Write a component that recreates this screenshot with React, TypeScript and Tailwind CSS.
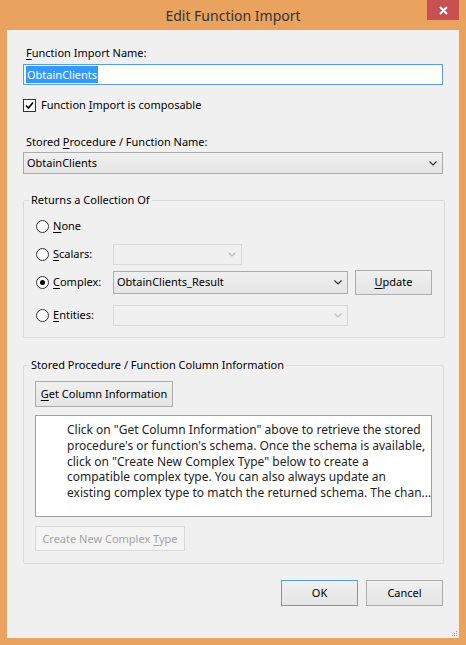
import type { ReactNode } from 'react'

const font = "font-['Noto_Sans',sans-serif]"

function U({ children }: { children: ReactNode }) {
  return <span className="underline underline-offset-2 decoration-1">{children}</span>
}

function Chevron({ disabled }: { disabled?: boolean }) {
  return (
    <svg width="8" height="5" viewBox="0 0 8 5" fill="none" aria-hidden="true">
      <path
        d="M0.5 0.5L4 4L7.5 0.5"
        stroke={disabled ? '#BFBFBF' : '#333333'}
        strokeWidth="1.2"
      />
    </svg>
  )
}

function Combo({
  value,
  disabled,
  className,
}: {
  value?: string
  disabled?: boolean
  className: string
}) {
  return (
    <div
      className={
        disabled
          ? `flex items-center justify-between border border-[#D9D9D9] bg-[#F0F0F0] pl-[3px] pr-[5px] ${className}`
          : `flex items-center justify-between border border-[#ACACAC] bg-gradient-to-b from-[#F0F0F0] to-[#E5E5E5] pl-[3px] pr-[5px] ${className}`
      }
    >
      <span className="text-[#000]">{value}</span>
      <Chevron disabled={disabled} />
    </div>
  )
}

function Button({
  children,
  className,
  disabled,
  isDefault,
}: {
  children: ReactNode
  className: string
  disabled?: boolean
  isDefault?: boolean
}) {
  let tone = 'border-[#ACACAC] bg-gradient-to-b from-[#F0F0F0] to-[#E5E5E5] text-[#000]'
  if (isDefault) tone = 'border-[#569DE5] bg-gradient-to-b from-[#F0F0F0] to-[#E5E5E5] text-[#000]'
  if (disabled) tone = 'border-[#D9D9D9] bg-[#F4F4F4] text-[#A3A3A3]'
  return (
    <div className={`flex items-center justify-center whitespace-nowrap border ${tone} ${className}`}>
      {children}
    </div>
  )
}

function Radio({ checked, children }: { checked?: boolean; children: ReactNode }) {
  return (
    <div className="flex items-center w-[77px] shrink-0">
      <span className="w-[13px] h-[13px] rounded-full border border-[#333] bg-white flex items-center justify-center">
        {checked && <span className="w-[5px] h-[5px] rounded-full bg-[#000]" />}
      </span>
      <span className="ml-[4px]">{children}</span>
    </div>
  )
}

export default function App() {
  const descLines = [
    'Click on "Get Column Information" above to retrieve the stored',
    "procedure's or function's schema. Once the schema is available,",
    'click on "Create New Complex Type" below to create a',
    'compatible complex type. You can also always update an',
    'existing complex type to match the returned schema. The chan...',
  ]

  return (
    <div className={`w-[466px] h-[645px] bg-[#E9A35F] flex flex-col ${font} text-[11px] leading-[16px] text-[#000]`}>
      {/* Title bar */}
      <div className="relative h-[30px] shrink-0 flex items-center justify-center">
        <span className="text-[14px] text-[#333] pt-[1px]">Edit Function Import</span>
        <div className="absolute right-[7px] top-0 w-[32px] h-[20px] bg-[#C75050] flex items-center justify-center">
          <svg width="9" height="9" viewBox="0 0 9 9" aria-hidden="true">
            <path d="M1 1L8 8M8 1L1 8" stroke="#fff" strokeWidth="2" />
          </svg>
        </div>
      </div>

      {/* Client area */}
      <div className="relative mx-[7px] mb-[7px] flex-1 bg-[#F0F0F0] px-[16px] pt-[15px] flex flex-col">
        <div className="pl-[3px]">
          <U>F</U>unction Import Name:
        </div>
        <div className="mt-[3px] h-[21px] border border-[#569DE5] bg-white flex items-center pl-[2px]">
          <span className="bg-[#3399FF] text-white px-[1px] leading-[17px]">ObtainClients</span>
        </div>

        <div className="mt-[12px] flex items-center h-[16px]">
          <span className="w-[13px] h-[13px] border border-[#333] bg-white flex items-center justify-center">
            <svg width="9" height="9" viewBox="0 0 9 9" fill="none" aria-hidden="true">
              <path d="M1 4.5L3.5 7L8 1.5" stroke="#000" strokeWidth="1.6" />
            </svg>
          </span>
          <span className="ml-[5px]">
            Function <U>I</U>mport is composable
          </span>
        </div>

        <div className="mt-[21px] pl-[3px]">
          Stored <U>P</U>rocedure / Function Name:
        </div>
        <Combo value="ObtainClients" className="mt-[2px] h-[22px]" />

        {/* Returns a Collection Of */}
        <fieldset className="mt-[18px] border border-[#DCDCDC] rounded-[2px] px-[12px] pb-[11px]">
          <legend className="-ml-[7px] px-[2px] leading-[16px]">Returns a Collection Of</legend>
          <div className="mt-[7px] flex items-center h-[22px]">
            <Radio>
              <U>N</U>one
            </Radio>
          </div>
          <div className="mt-[6px] flex items-center h-[22px]">
            <Radio>
              <U>S</U>calars:
            </Radio>
            <Combo disabled className="w-[129px] h-[21px]" />
          </div>
          <div className="mt-[4px] flex items-center h-[26px]">
            <Radio checked>
              <U>C</U>omplex:
            </Radio>
            <Combo value="ObtainClients_Result" className="w-[235px] h-[23px]" />
            <Button className="ml-[7px] w-[77px] h-[25px]">
              <span>
                <U>U</U>pdate
              </span>
            </Button>
          </div>
          <div className="mt-[9px] flex items-center h-[22px]">
            <Radio>
              <U>E</U>ntities:
            </Radio>
            <Combo disabled className="w-[235px] h-[21px]" />
          </div>
        </fieldset>

        {/* Column information */}
        <fieldset className="mt-[19px] border border-[#DCDCDC] rounded-[2px] px-[11px] pb-[12px]">
          <legend className="-ml-[6px] px-[2px] leading-[16px]">
            Stored Procedure / Function Column Information
          </legend>
          <Button className="mt-[8px] w-[138px] h-[26px]">
            <span>
              <U>G</U>et Column Information
            </span>
          </Button>
          <div className="mt-[8px] h-[102px] border border-[#A0A0A0] bg-white pl-[31px] pt-[6px] text-[12px] leading-[15.75px] text-[#1E1E1E]">
            {descLines.map((line) => (
              <div key={line} className="whitespace-nowrap">
                {line}
              </div>
            ))}
          </div>
          <Button disabled className="mt-[9px] w-[150px] h-[25px]">
            <span>
              Create New Complex <U>T</U>ype
            </span>
          </Button>
        </fieldset>

        {/* Dialog buttons */}
        <div className="mt-[16px] flex justify-end gap-[8px]">
          <Button isDefault className="w-[77px] h-[26px]">
            OK
          </Button>
          <Button className="w-[77px] h-[26px]">Cancel</Button>
        </div>

        {/* Resize grip */}
        <svg
          className="absolute right-[1px] bottom-[1px]"
          width="7"
          height="7"
          viewBox="0 0 7 7"
          aria-hidden="true"
        >
          <rect x="5" y="1" width="1" height="1" fill="#A0A0A0" />
          <rect x="3" y="3" width="1" height="1" fill="#A0A0A0" />
          <rect x="5" y="3" width="1" height="1" fill="#A0A0A0" />
          <rect x="1" y="5" width="1" height="1" fill="#A0A0A0" />
          <rect x="3" y="5" width="1" height="1" fill="#A0A0A0" />
          <rect x="5" y="5" width="1" height="1" fill="#A0A0A0" />
        </svg>
      </div>
    </div>
  )
}
